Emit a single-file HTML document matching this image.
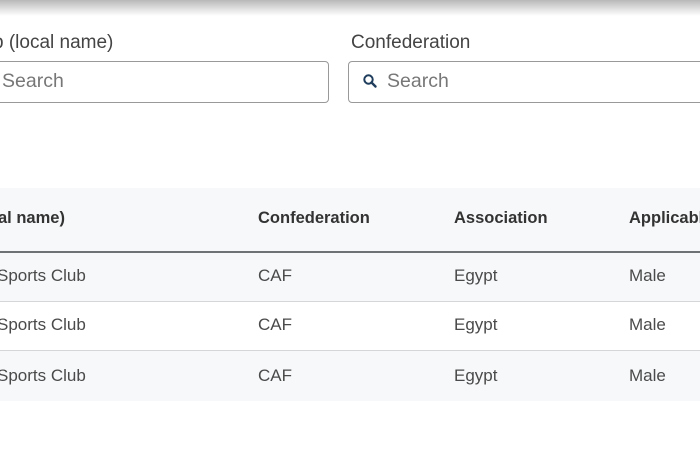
<!DOCTYPE html>
<html><head><meta charset="utf-8"><style>
*{margin:0;padding:0;box-sizing:border-box}
body{width:700px;height:450px;overflow:hidden;background:#fff;font-family:"Liberation Sans",sans-serif;color:#333;position:relative}
.shadow{position:absolute;left:0;top:0;width:700px;height:16px;background:linear-gradient(#b8b8b8,#e4e4e4 60%,#fff)}
.lbl{position:absolute;top:32px;font-size:19px;color:#444}
.box{position:absolute;top:61px;height:42px;border:1px solid #999;border-radius:4px;background:#fff}
.ph{position:absolute;top:70px;font-size:19.5px;color:#777}
.hdr{position:absolute;left:0;top:188px;width:700px;height:63px;background:#f7f8fa}
.hline{position:absolute;left:0;top:251px;width:700px;height:2px;background:#6f7274}
.row{position:absolute;left:0;width:700px;height:49px}
.sep{position:absolute;left:0;width:700px;height:1px;background:#d4d6d8}
.t{position:absolute;font-size:17px;color:#4a4a4a}
.h{position:absolute;top:209px;font-size:16.5px;font-weight:bold;color:#333}
</style></head><body>
<div class="shadow"></div>
<div class="lbl" style="left:-7px">b (local name)</div>
<div class="lbl" style="left:351px">Confederation</div>
<div class="box" style="left:-10px;width:339px"></div>
<div class="box" style="left:348px;width:370px"></div>
<div class="ph" style="left:2px">Search</div>
<svg style="position:absolute;left:362px;top:73px" width="16" height="16" viewBox="0 0 16 16"><circle cx="6.5" cy="6.5" r="4.2" fill="none" stroke="#1f3d5c" stroke-width="2"/><path d="M9.5 9.5L13.5 13.5" stroke="#1f3d5c" stroke-width="2.4" stroke-linecap="round"/></svg>
<div class="ph" style="left:387px">Search</div>

<div class="hdr"></div>
<div class="h" style="left:-2px">al name)</div>
<div class="h" style="left:258px">Confederation</div>
<div class="h" style="left:454px">Association</div>
<div class="h" style="left:629px">Applicable</div>
<div class="hline"></div>
<div class="row" style="top:253px;background:#f7f8fa"></div>
<div class="sep" style="top:301px"></div>
<div class="row" style="top:302px;background:#fff"></div>
<div class="sep" style="top:350px"></div>
<div class="row" style="top:351px;height:50px;background:#f7f8fa"></div>

<div class="t" style="left:-3px;top:266px">Sports Club</div>
<div class="t" style="left:258px;top:266px">CAF</div>
<div class="t" style="left:454px;top:266px">Egypt</div>
<div class="t" style="left:629px;top:266px">Male</div>
<div class="t" style="left:-3px;top:315px">Sports Club</div>
<div class="t" style="left:258px;top:315px">CAF</div>
<div class="t" style="left:454px;top:315px">Egypt</div>
<div class="t" style="left:629px;top:315px">Male</div>
<div class="t" style="left:-3px;top:366px">Sports Club</div>
<div class="t" style="left:258px;top:366px">CAF</div>
<div class="t" style="left:454px;top:366px">Egypt</div>
<div class="t" style="left:629px;top:366px">Male</div>
</body></html>
